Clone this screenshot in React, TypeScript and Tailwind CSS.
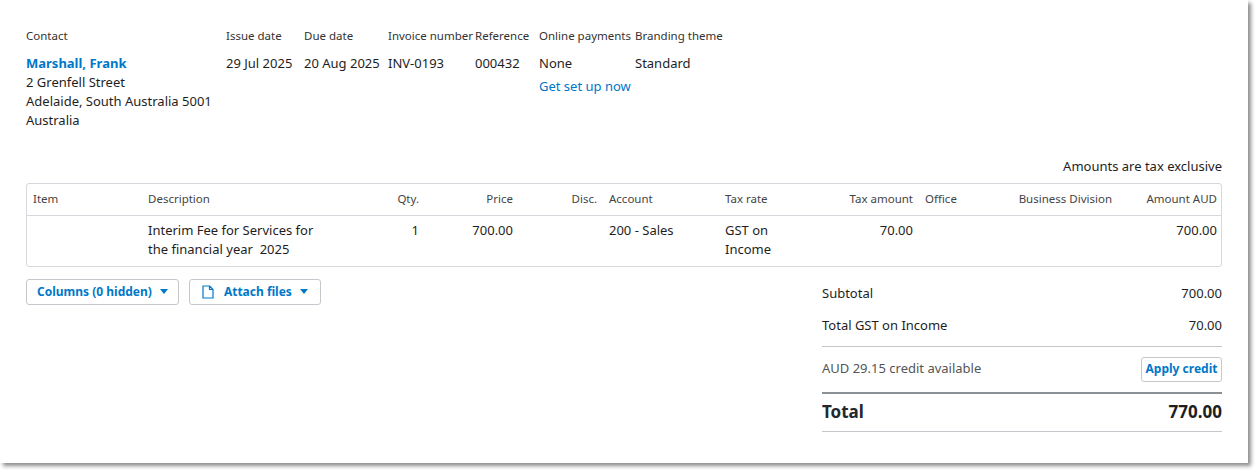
import React from 'react';

const cols = 'grid grid-cols-[115px_200px_83px_94px_84px_116px_104px_96px_82px_117px_105px]';

const Caret = () => (
  <svg width="8" height="5" viewBox="0 0 8 5" className="ml-2 inline-block">
    <path d="M0 0h8L4 5z" fill="#0078c8" />
  </svg>
);

export default function App() {
  const head = [
    ['Issue date', '29 Jul 2025', 'w-[78px]'],
    ['Due date', '20 Aug 2025', 'w-[84px]'],
    ['Invoice number', 'INV-0193', 'w-[87px]'],
    ['Reference', '000432', 'w-[64px]'],
  ];
  return (
    <div className="w-[1260px] h-[476px] bg-white font-['Liberation_Sans'] text-[#1e1e1e]">
      <div className="w-[1248px] h-[463px] bg-white shadow-[3px_3px_4px_rgba(0,0,0,0.45)] pt-[27px] pl-[26px] pr-[26px]">
        <div className="flex text-[13px]">
          <div className="w-[200px]">
            <div className="text-[11.5px] text-[#333] h-[17px]">Contact</div>
            <div className="mt-[10px] leading-[19px]">
              <div className="text-[#0078c8] font-bold">Marshall, Frank</div>
              <div>2 Grenfell Street</div>
              <div>Adelaide, South Australia 5001</div>
              <div>Australia</div>
            </div>
          </div>
          {head.map(([l, v, w]) => (
            <div key={l} className={w}>
              <div className="text-[11.5px] text-[#333] h-[17px]">{l}</div>
              <div className="mt-[10px] leading-[19px]">{v}</div>
            </div>
          ))}
          <div className="w-[96px]">
            <div className="text-[11.5px] text-[#333] h-[17px]">Online payments</div>
            <div className="mt-[10px] leading-[19px]">None</div>
            <div className="mt-[4px] leading-[19px] text-[#0078c8]">Get set up now</div>
          </div>
          <div>
            <div className="text-[11.5px] text-[#333] h-[17px]">Branding theme</div>
            <div className="mt-[10px] leading-[19px]">Standard</div>
          </div>
        </div>

        <div className="mt-[27px] text-right text-[13px]">Amounts are tax exclusive</div>

        <div className="mt-[6px] border border-[#d5d8dc] rounded-[3px]">
          <div className={`${cols} h-[32px] items-center text-[11.5px] text-[#444] border-b border-[#d5d8dc]`}>
            <div className="px-[6px]">Item</div>
            <div className="px-[6px]">Description</div>
            <div className="px-[6px] text-right">Qty.</div>
            <div className="px-[6px] text-right">Price</div>
            <div className="px-[6px] text-right">Disc.</div>
            <div className="px-[6px]">Account</div>
            <div className="px-[6px]">Tax rate</div>
            <div className="px-[6px] text-right">Tax amount</div>
            <div className="px-[6px]">Office</div>
            <div className="px-[6px] text-right">Business Division</div>
            <div className="px-[6px] text-right">Amount AUD</div>
          </div>
          <div className={`${cols} pt-[5px] pb-[7px] text-[13px] leading-[19px]`}>
            <div className="px-[6px]"></div>
            <div className="px-[6px]">Interim Fee for Services for the financial year&nbsp; 2025</div>
            <div className="px-[6px] text-right">1</div>
            <div className="px-[6px] text-right">700.00</div>
            <div className="px-[6px]"></div>
            <div className="px-[6px]">200 - Sales</div>
            <div className="px-[6px]">GST on Income</div>
            <div className="px-[6px] text-right">70.00</div>
            <div className="px-[6px]"></div>
            <div className="px-[6px]"></div>
            <div className="px-[6px] text-right">700.00</div>
          </div>
        </div>

        <div className="flex justify-between mt-[12px]">
          <div className="flex gap-[10px] items-start">
            <button className="h-[26px] px-[10px] border border-[#c4c8cc] rounded-[3px] text-[12px] font-bold text-[#0078c8] flex items-center">
              Columns (0 hidden)<Caret />
            </button>
            <button className="h-[26px] px-[12px] border border-[#c4c8cc] rounded-[3px] text-[12px] font-bold text-[#0078c8] flex items-center">
              <svg width="12" height="14" viewBox="0 0 12 14" className="mr-[10px]">
                <path d="M1 1h6.5L11 4.5V13H1z M7.5 1v3.5H11" fill="none" stroke="#0078c8" strokeWidth="1.2" strokeLinejoin="round" />
              </svg>
              Attach files<Caret />
            </button>
          </div>
          <div className="w-[400px] text-[13px]">
            <div className="flex justify-between h-[32px] items-center mt-[-1px]"><span>Subtotal</span><span>700.00</span></div>
            <div className="flex justify-between h-[32px] items-center"><span>Total GST on Income</span><span>70.00</span></div>
            <div className="border-t border-[#c4c8cc] mt-[4px] h-[46px] flex justify-between items-center">
              <span className="text-[#555]">AUD 29.15 credit available</span>
              <button className="h-[25px] w-[81px] border border-[#c4c8cc] rounded-[3px] text-[12px] font-bold text-[#0078c8]">Apply credit</button>
            </div>
            <div className="border-t-2 border-[#8c9196] h-[39px] flex justify-between items-center font-bold text-[17px]">
              <span className="text-[#22282e]">Total</span><span>770.00</span>
            </div>
            <div className="border-t border-[#c4c8cc]"></div>
          </div>
        </div>
      </div>
    </div>
  );
}
